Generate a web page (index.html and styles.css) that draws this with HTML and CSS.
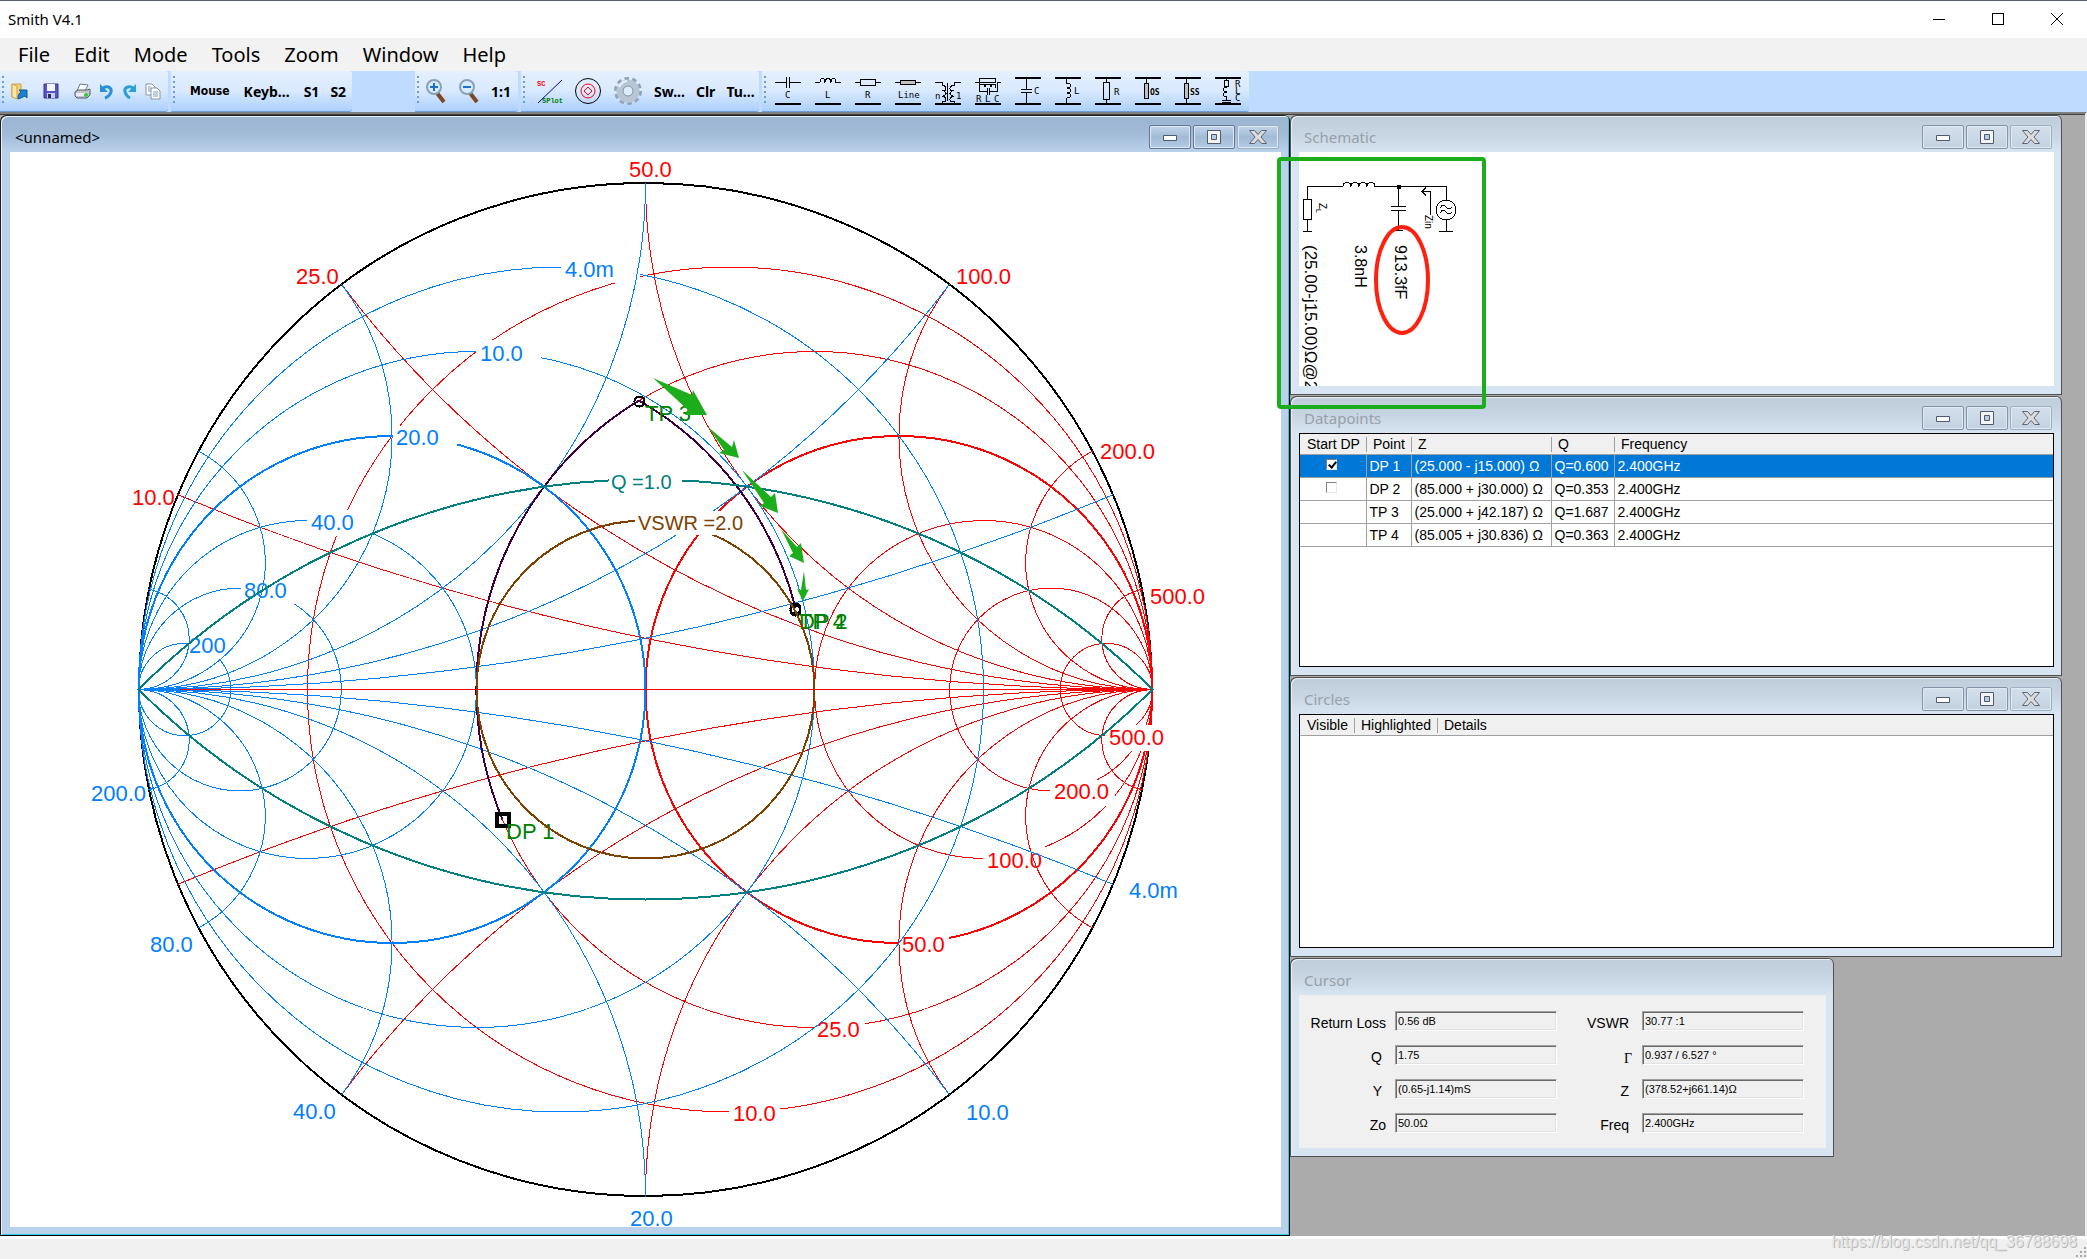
FILE: index.html
```html
<!DOCTYPE html>
<html lang="en">
<head>
<meta charset="utf-8">
<title>Smith V4.1</title>
<link rel="stylesheet" href="styles.css">
</head>
<body>
<div class="app">
  <header class="titlebar">
    <h1 class="app-title">Smith V4.1</h1>
    <div class="app-controls">
      <button class="app-btn" aria-label="Minimize"><svg width="12" height="12"><path d="M0 6.500h12"/></svg></button>
      <button class="app-btn" aria-label="Maximize"><svg width="14" height="14"><path d="M1.500 1.500h11v11h-11z"/></svg></button>
      <button class="app-btn" aria-label="Close"><svg width="14" height="14"><path d="M1 1l12 12M13 1L1 13" class="soft"/></svg></button>
    </div>
  </header>

  <nav class="menubar">
    <button class="menu">File</button>
    <button class="menu">Edit</button>
    <button class="menu">Mode</button>
    <button class="menu">Tools</button>
    <button class="menu">Zoom</button>
    <button class="menu">Window</button>
    <button class="menu">Help</button>
  </nav>

  <div class="toolstrip">
    <div class="group group-file">
      <button class="tool" aria-label="Open"><svg width="18" height="18" viewBox="0 0 18 18"><path d="M2 2h9v13H2z" fill="#f3d27a" stroke="#c9a245"/><path d="M2 2l5 2v13l-5-2z" fill="#fbe6a8" stroke="#c9a245"/><path d="M8 17c0-4 1-6 3-7l-2-2h8v8l-2-2c-2 1-4 2-7 3z" fill="#1d7fd0" stroke="#0d5a9e"/></svg></button>
      <button class="tool" aria-label="Save"><svg width="16" height="16" viewBox="0 0 16 16"><path d="M1 1h14v14H1z" fill="#5a55c4" stroke="#34309a"/><path d="M4 1h8v7H4z" fill="#f4f6ff"/><path d="M4 10h8v5H4z" fill="#c9cdf0"/><path d="M5 11h3v4H5z" fill="#2a2a5c"/></svg></button>
      <button class="tool" aria-label="Print"><svg width="17" height="17" viewBox="0 0 17 17"><path d="M6 1l8 1-3 6H3z" fill="#fff" stroke="#778"/><path d="M1 9l3-2h9l3-1v6l-3 3H3l-2-2z" fill="#c2c6cc" stroke="#555b66"/><path d="M2 10h9v3H2z" fill="#eef"/><circle cx="12" cy="12" r="2" fill="#2bd02b"/></svg></button>
      <button class="tool" aria-label="Undo"><svg width="15" height="17" viewBox="0 0 15 17"><path d="M4 5c5-3 9 0 8 4-1 3-3 5-6 6" fill="none" stroke="#2b8fd8" stroke-width="3"/><path d="M1 1v8h8z" fill="#2b8fd8"/></svg></button>
      <button class="tool" aria-label="Redo"><svg width="15" height="17" viewBox="0 0 15 17"><path d="M11 5C6 2 2 5 3 9c1 3 3 5 5 6" fill="none" stroke="#2b9fd8" stroke-width="3"/><path d="M14 1v8H6z" fill="#2b9fd8"/></svg></button>
      <button class="tool" aria-label="Copy"><svg width="16" height="17" viewBox="0 0 16 17"><path d="M1 1h6l3 3v8H1z" fill="#fff" stroke="#8a94a3"/><path d="M6 5h6l3 3v8H6z" fill="#fff" stroke="#8a94a3"/><path d="M3 4h3M3 6h3M3 8h3M8 9h5M8 11h5M8 13h5" stroke="#7d9fc8"/></svg></button>
    </div>
    <div class="group group-input">
      <button class="tool mouse">Mouse</button>
      <button class="tool">Keyb...</button>
      <button class="tool">S1</button>
      <button class="tool">S2</button>
    </div>
    <div class="strip-space"></div>
    <div class="group group-zoom">
      <button class="tool" aria-label="Zoom in"><svg width="22" height="26" viewBox="0 0 22 26"><path d="M12 15l7 9" stroke="#7a4a28" stroke-width="4"/><circle cx="9" cy="9" r="7" fill="#d6ecff" stroke="#8ba0b8" stroke-width="2"/><path d="M5 9h8M9 5v8" stroke="#1a6fd0" stroke-width="2"/></svg></button>
      <button class="tool" aria-label="Zoom out"><svg width="22" height="26" viewBox="0 0 22 26"><path d="M12 15l7 9" stroke="#7a4a28" stroke-width="4"/><circle cx="9" cy="9" r="7" fill="#d6ecff" stroke="#8ba0b8" stroke-width="2"/><path d="M5 9h8" stroke="#1a6fd0" stroke-width="2"/></svg></button>
      <button class="tool">1:1</button>
    </div>
    <div class="group group-plot">
      <button class="tool" aria-label="S plot"><svg width="26" height="27" viewBox="0 0 26 27"><text x="0" y="8" class="ico-mono" fill="#f00">SC</text><text x="5" y="25" class="ico-mono" fill="#008000">SPlot</text><path d="M1 25L25 2" stroke="#0000c0" fill="none"/></svg></button>
      <button class="tool" aria-label="Circles"><svg width="28" height="28" viewBox="0 0 28 28" fill="none" stroke="#f00" stroke-width="1"><circle cx="14" cy="14" r="12.500" stroke="#000"/><circle cx="14" cy="14" r="7"/><path d="M14 10l4 4-4 4-4-4z"/></svg></button>
      <button class="tool" aria-label="Settings"><svg width="30" height="30" viewBox="0 0 30 30"><circle cx="15" cy="15" r="12" fill="none" stroke="#8fa3b5" stroke-width="4" stroke-dasharray="4.300 3.240"/><circle cx="15" cy="15" r="8" fill="none" stroke="#b7c6d4" stroke-width="7"/><circle cx="15" cy="15" r="5" fill="#dfecfb" stroke="#7f93a6"/><path d="M6 11a10 10 0 0 1 8-6" stroke="#eef4fa" fill="none" stroke-width="2"/></svg></button>
      <button class="tool">Sw...</button>
      <button class="tool">Clr</button>
      <button class="tool">Tu...</button>
    </div>
    <div class="group group-parts">
      <button class="tool" aria-label="Series C"><svg class="part" viewBox="0 0 26 28"><path d="M0 5.500h11M15 5.500h11M11.500 0v11M14.500 0v11"/><path class="bar" d="M0 27h26"/><text x="10" y="21">C</text></svg></button>
      <button class="tool" aria-label="Series L"><svg class="part" viewBox="0 0 26 28"><path d="M0 5.500h5q0-4 2.500-4t2.500 4q0-4 3-4t3 4q0-4 2.500-4t2.500 4h5"/><path class="bar" d="M0 27h26"/><text x="10" y="21">L</text></svg></button>
      <button class="tool" aria-label="Series R"><svg class="part" viewBox="0 0 26 28"><path d="M0 5.500h5M21 5.500h5M5.500 2.500h15v6h-15z"/><path class="bar" d="M0 27h26"/><text x="10" y="21">R</text></svg></button>
      <button class="tool" aria-label="Series line"><svg class="part" viewBox="0 0 26 28"><path d="M0 5.500h26"/><path d="M5.500 3.500h15v4h-15z" fill="#c0c0c0"/><path class="bar" d="M0 27h26"/><text x="3" y="21">Line</text></svg></button>
      <button class="tool" aria-label="Transformer"><svg class="part" viewBox="0 0 26 28"><path d="M0 5.500h7v3q4 0 4 3t-4 2q4 1 4 3t-4 3q4 0 4 3t-4 2v2M26 5.500h-7v3q-4 0-4 3t4 2q-4 1-4 3t4 3q-4 0-4 3t4 2v2M12.500 6v18"/><path class="bar" d="M0 27h26"/><text x="0" y="22">n</text><text x="21" y="22">1</text></svg></button>
      <button class="tool" aria-label="Series RLC"><svg class="part" viewBox="0 0 26 28"><path d="M0 5.500h4v9h8M26 5.500h-4v9h-8M4.500 1.500h16v4h-16zM4 11q0-4 3-4t3 3q0-3 3-3t3 3q0-3 2.500-3t2.500 4M12.500 11v7M14.500 11v7"/><path class="bar" d="M0 27h26"/><text x="1" y="25">R</text><text x="10" y="25">L</text><text x="19" y="25">C</text></svg></button>
      <button class="tool" aria-label="Shunt C"><svg class="part" viewBox="0 0 26 28"><path d="M11.500 1v11M11.500 15v11M6 12.500h11M6 15.500h11"/><path class="bar" d="M0 1h26M0 27h26"/><text x="19" y="17">C</text></svg></button>
      <button class="tool" aria-label="Shunt L"><svg class="part" viewBox="0 0 26 28"><path d="M11.500 1v5q4 0 4 2.500t-4 2.500q4 0 4 2.500t-4 2.500q4 0 4 2.500t-4 2.500v5"/><path class="bar" d="M0 1h26M0 27h26"/><text x="19" y="17">L</text></svg></button>
      <button class="tool" aria-label="Shunt R"><svg class="part" viewBox="0 0 26 28"><path d="M11.500 1v4M11.500 23v4M8.500 5.500h6v17h-6z"/><path class="bar" d="M0 1h26M0 27h26"/><text x="19" y="18">R</text></svg></button>
      <button class="tool" aria-label="Open stub"><svg class="part" viewBox="0 0 26 28"><path d="M11.500 1v6"/><path d="M9.500 6.500h4v15h-4z" fill="#c0c0c0"/><path class="bar" d="M0 1h26M0 27h26"/><text x="15" y="18" class="strong">OS</text></svg></button>
      <button class="tool" aria-label="Shorted stub"><svg class="part" viewBox="0 0 26 28"><path d="M11.500 1v26"/><path d="M9.500 6.500h4v15h-4z" fill="#c0c0c0"/><path class="bar" d="M0 1h26M0 27h26"/><text x="15" y="18" class="strong">SS</text></svg></button>
      <button class="tool" aria-label="Shunt RLC"><svg class="part" viewBox="0 0 26 28"><path d="M11.500 1v2M9.500 3.500h4v6h-4zM11.500 10q-3 0-3 2.500t3 2.500q-3 0-3 2.500t3 2.500v3M7 23.500h9M7 25.500h9"/><path class="bar" d="M0 1h26M0 27h26"/><text x="20" y="10">R</text><text x="20" y="17">L</text><text x="20" y="24">C</text></svg></button>
    </div>
  </div>

  <main class="workspace">
    <section class="win win-active">
      <header class="win-head">
        <h2 class="win-title">&lt;unnamed&gt;</h2>
        <div class="win-controls">
          <button class="win-btn" aria-label="Minimize"><svg width="18" height="18"><use href="#g-min"/></svg></button>
          <button class="win-btn" aria-label="Maximize"><svg width="18" height="18"><use href="#g-max"/></svg></button>
          <button class="win-btn" aria-label="Close"><svg width="18" height="18"><use href="#g-close"/></svg></button>
        </div>
      </header>
      <div class="win-body">
        <svg class="chart" viewBox="10 152 1271 1075" role="img" aria-label="Smith chart">
          <defs>
            <g id="g-min"><path d="M2.500 7.500h13v5h-13z" fill="#fff" stroke="#4d5a70"/></g>
            <g id="g-max"><path d="M2.500 2.500h13v13h-13z" fill="#f4f4f4" stroke="#4d5a70"/><path d="M6.500 6.500h5v5h-5z" fill="#b9cbe0" stroke="#4d5a70"/></g>
            <g id="g-close"><path d="M0.500 2.500h5l3.500 4 3.500-4h5l-5.500 6.500 5.500 6.500h-5L9 11.500l-3.500 4h-5l5.500-6.500z" fill="#dcdcdc" stroke="#5c6678"/></g>
            <g id="levels">
              <circle cx="84.500" r="422.500"/><circle cx="169" r="338"/><circle cx="253.500" r="253.500" stroke-width="2"/>
              <circle cx="338" r="169"/><circle cx="405.600" r="101.400"/><circle cx="460.900" r="46.100"/>
            </g>
            <g id="fan">
              <path d="M-468-195A2535 2535 0 0 0 507 0M-304.200-405.600A1014 1014 0 0 0 507 0M0-507A507 507 0 0 0 507 0M304.200-405.600A253.500 253.500 0 0 0 507 0M447.400-238.600A126.750 126.750 0 0 0 507 0M497-100.400A50.700 50.700 0 0 0 507 0"/>
            </g>
          </defs>

          <circle class="curve" cx="645.500" cy="689.500" r="506.500" stroke="#000" stroke-width="2"/>

          <g class="curve z" transform="translate(645.500 689.500)"><use href="#levels"/></g>
          <g class="blank"><path d="M899 931h50v26h-50zM814 1016h51v26h-51zM729 1100h51v26h-51zM983 847h64v26h-64zM1050 780h65v26h-65zM1105 725h65v26h-65z"/></g>
          <g class="label z-text">
            <text x="733" y="1121">10.0</text><text x="817" y="1037">25.0</text><text x="902" y="952">50.0</text>
            <text x="987" y="868">100.0</text><text x="1054" y="799">200.0</text><text x="1109" y="745">500.0</text>
            <text x="629" y="177">50.0</text><text x="296" y="284">25.0</text><text x="132" y="505">10.0</text>
            <text x="956" y="284">100.0</text><text x="1100" y="459">200.0</text><text x="1150" y="604">500.0</text>
          </g>
          <g class="curve z" transform="translate(645.500 689.500)"><use href="#fan"/><use href="#fan" transform="scale(1 -1)"/></g>

          <g class="curve y" transform="translate(645.500 689.500) scale(-1 1)"><use href="#levels"/></g>
          <g class="blank"><path d="M561 257h79v26h-79zM476 340h65v26h-65zM392 426h65v26h-65zM307 510h65v26h-65zM241 578h65v26h-65zM188 634h50v26h-50z"/></g>
          <g class="label y-text">
            <text x="565" y="277">4.0m</text><text x="480" y="361">10.0</text><text x="396" y="445">20.0</text>
            <text x="311" y="530">40.0</text><text x="244" y="598">80.0</text><text x="189" y="653">200</text>
            <text x="91" y="801">200.0</text><text x="150" y="952">80.0</text><text x="293" y="1119">40.0</text>
            <text x="630" y="1226">20.0</text><text x="966" y="1120">10.0</text><text x="1129" y="898">4.0m</text>
          </g>
          <g class="curve y" transform="translate(645.500 689.500) scale(-1 1)"><use href="#fan"/><use href="#fan" transform="scale(1 -1)"/></g>
          <path class="curve z" d="M180 689.500H1152"/>

          <g class="curve" transform="translate(645.500 689.500)">
            <path d="M-143 130A338 338 0 0 1-6.500-289A333.600 333.600 0 0 1 150-81.600" stroke="#400040" stroke-width="2"/>
            <g stroke="#000" stroke-width="2">
              <circle cx="-6" cy="-288" r="5"/><circle cx="150" cy="-79" r="5"/><circle cx="150" cy="-81" r="5"/>
            </g>
            <path d="M-148.500 124.500h12v12h-12z" stroke="#000" stroke-width="4"/>
          </g>
          <g class="label dp">
            <text x="645" y="421">TP 3</text><text x="799" y="629">TP 4</text><text x="799" y="629">DP 2</text><text x="506" y="839">DP 1</text>
          </g>

          <g class="curve" transform="translate(645.500 689.500)" stroke-width="2">
            <path d="M-507 0A717 717 0 0 1 507 0A717 717 0 0 1-507 0" stroke="#008080"/>
            <circle r="169" stroke="#804000"/>
          </g>
          <g class="blank"><path d="M609 470h73v25h-73zM635 511h98v24h-98z"/></g>
          <text class="note" x="611" y="489" fill="#008080">Q =1.0</text>
          <text class="note" x="638" y="530" fill="#804000">VSWR =2.0</text>

          <g fill="#1cad1c">
            <path d="M653 378l39 17 1-5 14 25-22 0 3-5-13-12z"/>
            <path d="M708 427l24 20 2-7 5 18-20-5 5-3z"/>
            <path d="M742 470l29 27 4-4 3 20-18-7 4-3z"/>
            <path d="M781 529l16 18 4-4 3 20-15-7 4-3z"/>
            <path d="M804 571l2 19 3-1-6 12-6-12 4 1z"/>
          </g>
        </svg>
      </div>
    </section>

    <div class="stack">
      <section class="win">
        <header class="win-head">
          <h2 class="win-title">Schematic</h2>
          <div class="win-controls">
            <button class="win-btn" aria-label="Minimize"><svg width="18" height="18"><use href="#g-min"/></svg></button>
            <button class="win-btn" aria-label="Maximize"><svg width="18" height="18"><use href="#g-max"/></svg></button>
            <button class="win-btn" aria-label="Close"><svg width="18" height="18"><use href="#g-close"/></svg></button>
          </div>
        </header>
        <div class="win-body schematic">
          <svg width="200" height="234" viewBox="1299 152 200 234" role="img" aria-label="Matching network">
            <g class="wire">
              <path d="M1307.500 199V186.500H1343q0-4 4-4t4 4q0-4 4-4t4 4q0-4 4-4t4 4q0-4 4-4t4 4H1446.500V200M1303.500 199.500h8v20h-8zM1307.500 220v11M1303 231.500h9M1398.500 186v20M1391 206.500h15M1391 210.500h15M1398.500 211v19M1394 230.500h9M1446.500 220v11M1439 231.500h14M1430.500 215V191.500H1422M1426 187.500l-4 4 4 4"/>
              <circle cx="1446" cy="210" r="10"/>
              <path d="M1440 208q3-5 6-1t6 0M1440 213q3-5 6-1t6 0"/>
              <path d="M1397 185h3v3h-3z" fill="#000"/>
            </g>
            <text class="part-value" transform="translate(1395 245) rotate(90)">913.3fF</text>
            <text class="part-value" transform="translate(1355 245) rotate(90)">3.8nH</text>
            <text class="load-value" transform="translate(1305 245) rotate(90)">(25.00-j15.00)Ω@2</text>
            <text class="part-name" transform="translate(1425 215) rotate(90)">Zin</text>
            <text class="part-name" transform="translate(1319 203) rotate(90)">Z</text>
            <text class="part-sub" transform="translate(1316 209) rotate(90)">L</text>
            <ellipse cx="1402" cy="280" rx="26" ry="53" fill="none" stroke="#ff2010" stroke-width="4"/>
          </svg>
        </div>
        <div class="marker"></div>
      </section>

      <section class="win">
        <header class="win-head">
          <h2 class="win-title">Datapoints</h2>
          <div class="win-controls">
            <button class="win-btn" aria-label="Minimize"><svg width="18" height="18"><use href="#g-min"/></svg></button>
            <button class="win-btn" aria-label="Maximize"><svg width="18" height="18"><use href="#g-max"/></svg></button>
            <button class="win-btn" aria-label="Close"><svg width="18" height="18"><use href="#g-close"/></svg></button>
          </div>
        </header>
        <div class="win-body framed">
          <table class="grid points">
            <colgroup><col class="c-start"><col class="c-point"><col class="c-z"><col class="c-q"><col></colgroup>
            <thead><tr><th>Start DP</th><th>Point</th><th>Z</th><th>Q</th><th>Frequency</th></tr></thead>
            <tbody>
              <tr class="selected"><td class="tick"><input type="checkbox" aria-label="Start at DP 1" checked></td><td>DP 1</td><td>(25.000 - j15.000) Ω</td><td>Q=0.600</td><td>2.400GHz</td></tr>
              <tr><td class="tick"><input type="checkbox" aria-label="Start at DP 2"></td><td>DP 2</td><td>(85.000 + j30.000) Ω</td><td>Q=0.353</td><td>2.400GHz</td></tr>
              <tr><td></td><td>TP 3</td><td>(25.000 + j42.187) Ω</td><td>Q=1.687</td><td>2.400GHz</td></tr>
              <tr><td></td><td>TP 4</td><td>(85.005 + j30.836) Ω</td><td>Q=0.363</td><td>2.400GHz</td></tr>
            </tbody>
          </table>
        </div>
      </section>

      <section class="win">
        <header class="win-head">
          <h2 class="win-title">Circles</h2>
          <div class="win-controls">
            <button class="win-btn" aria-label="Minimize"><svg width="18" height="18"><use href="#g-min"/></svg></button>
            <button class="win-btn" aria-label="Maximize"><svg width="18" height="18"><use href="#g-max"/></svg></button>
            <button class="win-btn" aria-label="Close"><svg width="18" height="18"><use href="#g-close"/></svg></button>
          </div>
        </header>
        <div class="win-body framed">
          <table class="grid">
            <colgroup><col class="c-visible"><col class="c-high"><col></colgroup>
            <thead><tr><th>Visible</th><th>Highlighted</th><th>Details</th></tr></thead>
          </table>
        </div>
      </section>

      <section class="win win-cursor">
        <header class="win-head"><h2 class="win-title">Cursor</h2></header>
        <form class="win-body readout">
          <label for="rl" class="wide">Return Loss</label><input id="rl" value="0.56 dB" readonly>
          <label for="vswr">VSWR</label><input id="vswr" value="30.77 :1" readonly>
          <label for="q">Q</label><input id="q" value="1.75" readonly>
          <label for="gamma" class="greek">Γ</label><input id="gamma" value="0.937 / 6.527 °" readonly>
          <label for="y">Y</label><input id="y" value="(0.65-j1.14)mS" readonly>
          <label for="z">Z</label><input id="z" value="(378.52+j661.14)Ω" readonly>
          <label for="zo" class="wide">Zo</label><input id="zo" value="50.0Ω" readonly>
          <label for="freq">Freq</label><input id="freq" value="2.400GHz" readonly>
        </form>
      </section>
    </div>
  </main>

  <footer class="statusbar">
    <span class="watermark">https://blog.csdn.net/qq_36788698</span>
    <svg class="sizer" width="12" height="12" fill="#a8a8a8"><path d="M9 0h2v2H9zM9 4h2v2H9zM9 8h2v2H9zM5 4h2v2H5zM5 8h2v2H5zM1 8h2v2H1z"/></svg>
  </footer>
</div>
</body>
</html>
```
FILE: styles.css
```css
* { box-sizing: border-box; }

body {
  margin: 0;
  font-family: "Liberation Sans", Arial, sans-serif;
  font-size: 14px;
  color: #000;
}

h1, h2 { margin: 0; font-weight: 400; }

button {
  font: inherit;
  color: inherit;
  margin: 0;
  padding: 0;
  border: 0;
  background: none;
}

svg { display: block; }

.app {
  display: flex;
  flex-direction: column;
  min-height: 100vh;
  background: #f0f0f0;
}

/* application frame */
.titlebar {
  display: flex;
  align-items: center;
  justify-content: space-between;
  height: 38px;
  padding: 0 15px 2px 8px;
  border-top: 1px solid #5a6068;
  background: #fff;
  font-family: "Noto Sans", sans-serif;
}

.app-title { font-size: 15px; line-height: 20px; }

.app-controls { display: flex; gap: 28px; }

.app-btn {
  display: flex;
  align-items: center;
  justify-content: center;
  width: 31px;
  height: 30px;
}

.app-btn svg { fill: none; stroke: #000; shape-rendering: crispEdges; }
.app-btn .soft { shape-rendering: auto; }

.menubar {
  display: flex;
  height: 33px;
  padding: 0 6px;
  background: #f2f2f2;
  font-family: "Noto Sans", sans-serif;
  font-size: 20px;
  line-height: 34px;
}

.menu { padding: 0 12px; }

/* toolbar */
.toolstrip {
  display: flex;
  gap: 3px;
  height: 41px;
  background: #bfdbff;
  font-family: "Noto Sans", sans-serif;
  font-size: 14px;
  font-weight: 700;
}

.group {
  position: relative;
  display: flex;
  align-items: center;
  padding-left: 10px;
  border-bottom: 1px solid #6f9dd9;
  border-radius: 0 3px 3px 0;
  background: linear-gradient(#e5f0ff, #d9e9ff 50%, #abd0fd);
}

.group::before {
  content: "";
  position: absolute;
  left: 2px;
  top: 5px;
  bottom: 5px;
  width: 2px;
  background: repeating-linear-gradient(#6f9dd9 0 2px, transparent 2px 5px);
}

.group-file { width: 168px; gap: 8px; }
.group-file .tool:nth-child(2), .group-file .tool:nth-child(3) { margin-left: 7px; }
.group-input { width: 181px; gap: 14px; padding-left: 19px; }
.group-input .mouse { font-size: 12px; font-family: "DejaVu Sans Condensed", "Open Sans", sans-serif; }
.group-input .tool:last-child { margin-left: -3px; }
.strip-space { width: 57px; }
.group-zoom { width: 103px; gap: 11px; }
.group-plot { width: 238px; gap: 11px; padding-left: 16px; }
.group-parts { width: 487px; gap: 14px; padding-left: 13px; }

.group-plot .ico-mono { font: 700 7px "Liberation Mono", monospace; }

.part {
  width: 26px;
  height: 28px;
  fill: none;
  stroke: #000;
  shape-rendering: crispEdges;
}

.part .bar { stroke-width: 2; }
.part text { fill: #000; stroke: none; font: 9px "DejaVu Sans Mono", monospace; }
.part .strong { font-size: 8px; font-weight: 700; }

/* child windows */
.workspace {
  flex: 1;
  display: grid;
  grid-template-columns: minmax(0, 1fr) 772px;
  padding: 1px 23px 0 0;
  border-top: 2px solid #7f7f7f;
  border-right: 2px solid #f0f0f0;
  box-shadow: inset 0 1px #404040;
  background: #ababab;
}

.win {
  position: relative;
  display: flex;
  flex-direction: column;
  padding: 0 8px 9px 9px;
  border-radius: 6px 6px 0 0;
  background: linear-gradient(#bfcddb, #c8d5e2 20px, #d7e4f2 37px);
  box-shadow: inset 1px 1px #505050, inset -1px 0 #505050, inset 0 -1px #505050, inset 2px 2px #e9f0f7;
}

.win-active {
  padding: 0 9px 9px 10px;
  background: linear-gradient(#99b4d1, #a3bcd8 20px, #b9d1ea 37px);
  box-shadow: inset 1px 1px #202020, inset -1px -1px #000, inset 2px 2px #e8f2fb, inset -2px -2px #30c8e0;
}

.win-head {
  display: flex;
  align-items: center;
  justify-content: space-between;
  height: 37px;
  padding: 7px 2px 0 5px;
  flex: none;
}

.win-title {
  font: 15px/24px "Noto Sans", sans-serif;
  color: #98a0a8;
}

.win-active .win-title { color: #000; }

.win-controls { display: flex; gap: 2px; }

.win-btn {
  display: flex;
  align-items: center;
  justify-content: center;
  width: 42px;
  height: 24px;
  border: 1px solid #8593a8;
  border-radius: 2px;
  background: linear-gradient(#d3dfeb, #c3d1e0);
  box-shadow: inset 0 0 0 1px #dfe9f3;
}

.win-active .win-btn {
  background: linear-gradient(#c2d6eb, #a2bbd6 50%, #b3cbe5);
  border-color: #64779a;
}

.win .win-btn:last-child { border-color: #9fb0c4; }

.win-body { flex: 1; background: #fff; min-height: 0; }

.chart { width: 100%; height: 100%; min-height: 400px; overflow: visible; }
.curve { fill: none; shape-rendering: crispEdges; }
.z { stroke: #f00; }
.y { stroke: #0080ff; }
.blank { fill: #fff; shape-rendering: crispEdges; }
.label { font-size: 22px; }
.z-text { fill: #f00; }
.y-text { fill: #0080ff; }
.dp { fill: #008000; }
.note { font-size: 20px; }

.stack { display: flex; flex-direction: column; gap: 1px; min-width: 0; }
.stack .win { min-height: 280px; }
.stack .win-cursor { width: 544px; min-height: 199px; }

.wire { fill: none; stroke: #000; shape-rendering: crispEdges; }
.part-value { font-size: 16px; }
.load-value { font-size: 17px; }
.part-name { font-size: 10px; }
.part-sub { font-size: 7px; }

.marker {
  position: absolute;
  z-index: 2;
  left: -13px;
  top: 42px;
  width: 209px;
  height: 252px;
  border: 4px solid #1cad1c;
  border-radius: 4px;
}

.framed { border: 1px solid #000; }

.grid {
  width: 100%;
  border-collapse: collapse;
  table-layout: fixed;
  line-height: 18px;
}

.grid th {
  position: relative;
  height: 20px;
  padding: 1px 7px 0;
  border-bottom: 1px solid #a0a0a0;
  background: #f0f0f0;
  font-weight: 400;
  text-align: left;
  white-space: nowrap;
}

.grid th + th::before {
  content: "";
  position: absolute;
  left: 0;
  top: 3px;
  bottom: 2px;
  border-left: 1px solid #a0a0a0;
}

.grid td {
  height: 23px;
  padding: 2px 3px;
  border: solid #a0a0a0;
  border-width: 0 0 1px 1px;
  white-space: nowrap;
}

.grid td:first-child { border-left: 0; }
.selected { background: #0078d7; color: #fff; }
.c-start { width: 66px; }
.c-point { width: 45px; }
.c-z { width: 140px; }
.c-q { width: 63px; }
.c-visible { width: 54px; }
.c-high { width: 83px; }

.grid .tick { padding: 4px 0 0 26px; vertical-align: top; line-height: 0; }

.tick input {
  appearance: none;
  width: 11px;
  height: 11px;
  margin: 0;
  border: 1px solid;
  border-color: #808080 #e8e8e8 #e8e8e8 #808080;
  background: #fff;
}

.tick input:checked::after {
  content: "";
  display: block;
  width: 3px;
  height: 6px;
  margin: 0 0 0 3px;
  border: solid #000;
  border-width: 0 2px 2px 0;
  transform: rotate(40deg);
}

.readout {
  display: grid;
  grid-template-columns: 88px 162px 69px 162px;
  grid-auto-rows: 20px;
  column-gap: 8px;
  row-gap: 14px;
  align-content: start;
  padding-top: 16px;
  background: #f0f0f0;
}

.readout label { text-align: right; line-height: 24px; padding-right: 5px; }
.readout .wide { padding-right: 1px; }
.readout .greek { font-family: "Liberation Serif", serif; line-height: 28px; padding-right: 2px; }

.readout input {
  min-width: 0;
  padding: 0 2px 1px;
  border: 1px solid;
  border-color: #a0a0a0 #fff #fff #a0a0a0;
  box-shadow: inset 1px 1px #696969, inset -1px -1px #e3e3e3;
  background: #f0f0f0;
  font: 11px "Liberation Sans", Arial, sans-serif;
}

.statusbar {
  position: relative;
  display: flex;
  align-items: flex-end;
  justify-content: flex-end;
  height: 23px;
  border-top: 3px solid #fff;
}

.watermark {
  position: absolute;
  right: 10px;
  bottom: 7px;
  font-size: 16px;
  line-height: 20px;
  color: #e4e4e4;
  text-shadow: 1px 1px #b8b8b8;
}
```
